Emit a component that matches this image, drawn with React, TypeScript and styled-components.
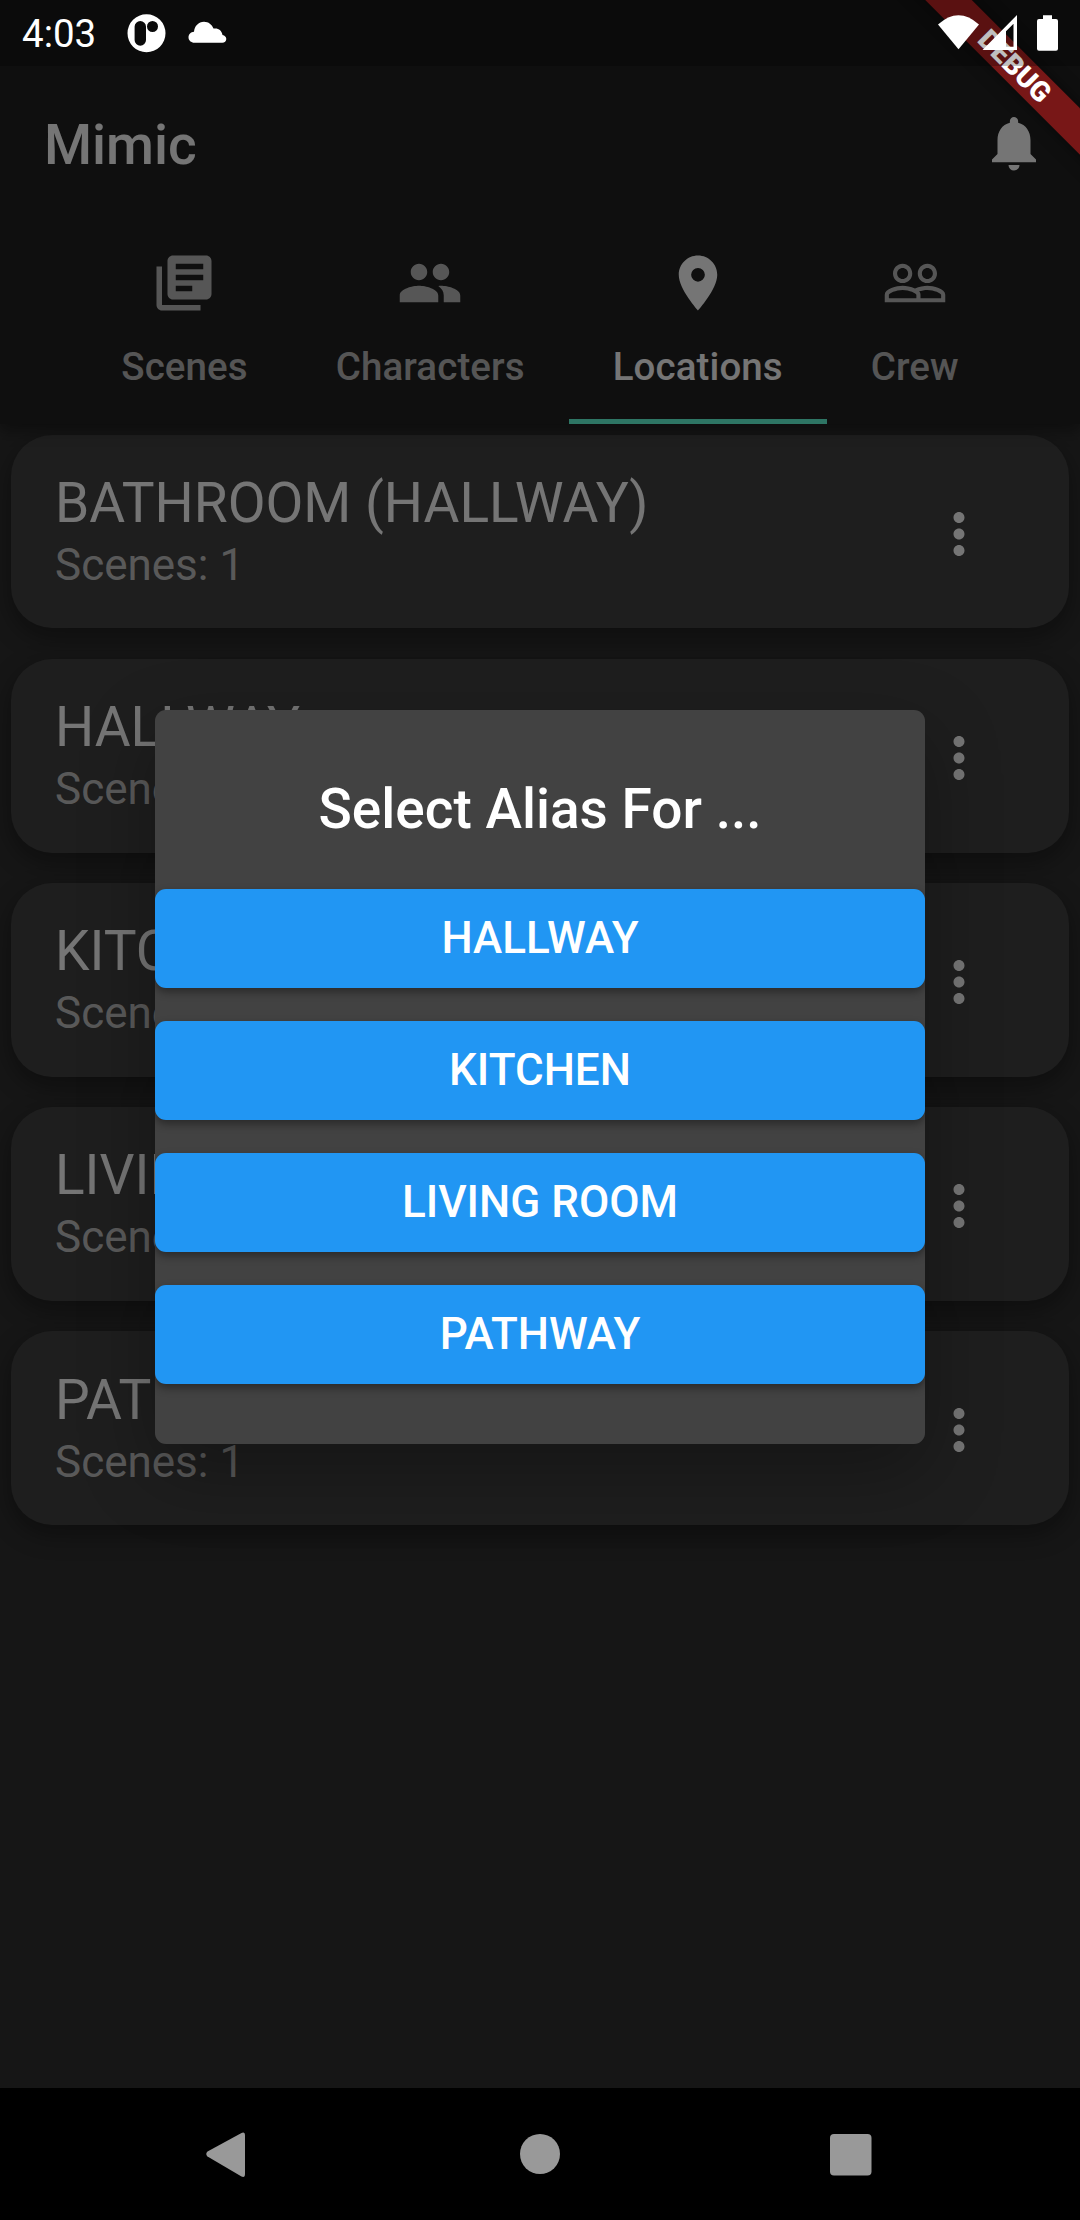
import React from "react";
import styled, { createGlobalStyle } from "styled-components";
import {
  MdLibraryBooks,
  MdLocationOn,
  MdMoreVert,
  MdNotifications,
  MdPeople,
} from "react-icons/md";

const GlobalStyle = createGlobalStyle`
  *, *::before, *::after { box-sizing: border-box; }
  body {
    margin: 0;
    background: #000;
    font-family: Roboto, "Noto Sans", sans-serif;
  }
`;

const Screen = styled.div`
  position: relative;
  display: flex;
  flex-direction: column;
  width: 1080px;
  height: 2220px;
  overflow: hidden;
  background: #303030;
  color: #fff;
`;

/* System status bar, drawn over the app */

const StatusBar = styled.div`
  position: absolute;
  top: 0;
  left: 0;
  width: 100%;
  height: 66px;
  display: flex;
  align-items: flex-start;
  justify-content: space-between;
  background: rgba(0, 0, 0, 0.25);
`;

const StatusLeft = styled.div`
  display: flex;
  padding-left: 22px;
`;

const Clock = styled.span`
  width: 105px;
  padding-top: 11px;
  font-size: 38.5px;
  line-height: 46px;
`;

const StatusGlyph = styled.svg`
  display: block;
  fill: #fff;
`;

/* App bar and tabs */

const AppBar = styled.header`
  position: relative;
  flex: none;
  height: 423.5px;
  padding-top: 66px;
  background: #212121;
  box-shadow: 0 6px 14px rgba(0, 0, 0, 0.4);
`;

const Toolbar = styled.div`
  display: flex;
  align-items: center;
  justify-content: space-between;
  height: 154px;
  padding: 0 33px 0 44px;
`;

const Title = styled.h1`
  margin: 0;
  padding-top: 4px;
  font-size: 55px;
  font-weight: 500;
  line-height: 66px;
`;

const Tabs = styled.nav`
  display: flex;
  justify-content: center;
  height: 203.5px;
`;

const Tab = styled.div<{ $active?: boolean }>`
  display: flex;
  flex-direction: column;
  align-items: center;
  gap: 27.5px;
  padding: 30px 44px 0;
  border-bottom: 5.5px solid ${(p) => (p.$active ? "#64ffda" : "transparent")};
  color: ${(p) => (p.$active ? "#fff" : "rgba(255, 255, 255, 0.7)")};
  font-size: 38.5px;
  font-weight: 500;
  line-height: 46px;
  letter-spacing: 0.1px;

  svg {
    flex: none;
    display: block;
  }
`;

/* Location cards */

const List = styled.main`
  flex: 1;
  display: flex;
  flex-direction: column;
  gap: 30.25px;
  padding: 11px;
`;

const Card = styled.article`
  flex: none;
  display: flex;
  align-items: center;
  justify-content: space-between;
  height: 193.875px;
  padding: 0 77px 0.8px 44px;
  border-radius: 41.25px;
  background: #424242;
  box-shadow: 0 9px 24px rgba(0, 0, 0, 0.36);

  svg {
    display: block;
    margin-top: 5.8px;
  }
`;

const CardTitle = styled.h2`
  margin: 0;
  font-size: 55px;
  font-weight: 400;
  line-height: 64px;
`;

const CardSubtitle = styled.p`
  margin: 4px 0 0;
  color: rgba(255, 255, 255, 0.7);
  font-size: 44px;
  line-height: 52px;
`;

/* System navigation */

const NavBar = styled.footer`
  flex: none;
  display: flex;
  height: 132px;
  background: #000;

  svg {
    display: block;
    fill: #999;
  }
`;

/* Dialog */

const Scrim = styled.div`
  position: absolute;
  top: 0;
  left: 0;
  width: 100%;
  height: 2088px;
  display: flex;
  align-items: center;
  justify-content: center;
  padding-top: 66px;
  background: rgba(0, 0, 0, 0.54);
`;

const Dialog = styled.section`
  display: flex;
  flex-direction: column;
  width: 770px;
  height: 734px;
  padding-top: 66px;
  overflow: hidden;
  border-radius: 11px;
  background: #424242;
`;

const DialogShadow = styled.div`
  border-radius: 11px;
  box-shadow: 0 26px 76px rgba(0, 0, 0, 0.3);
`;

const DialogTitle = styled.h2`
  margin: 0 0 46.5px;
  font-size: 55px;
  font-weight: 500;
  line-height: 66px;
  text-align: center;
`;

const Options = styled.div`
  display: flex;
  flex-direction: column;
  gap: 33px;
`;

const Option = styled.button`
  height: 99px;
  padding: 0;
  border: 0;
  border-radius: 11px;
  background: #2196f3;
  box-shadow: 0 4px 8px rgba(0, 0, 0, 0.38);
  color: #fff;
  font-family: inherit;
  font-size: 44px;
  font-weight: 500;
  line-height: 52px;
`;

/* Debug ribbon */

const RibbonCorner = styled.div`
  position: absolute;
  top: 0;
  right: 0;
  width: 200px;
  height: 200px;
  overflow: hidden;
`;

const Ribbon = styled.div`
  position: absolute;
  top: 49.3px;
  left: -15.8px;
  width: 300px;
  height: 33px;
  padding-left: 2px;
  transform: rotate(45deg);
  background: rgba(183, 28, 28, 0.627);
  box-shadow: 0 0 16px rgba(0, 0, 0, 0.5);
  font-size: 28px;
  font-weight: 900;
  line-height: 33px;
  text-align: center;
`;

const PeopleOutline = () => (
  <svg width="66" height="66" viewBox="0 0 24 24" fill="currentColor">
    <path d="M16.5 13c-1.2 0-3.07.34-4.5 1-1.43-.67-3.3-1-4.5-1C5.33 13 1 14.08 1 16.25V19h22v-2.75c0-2.17-4.33-3.25-6.5-3.25zm-4 4.5h-10v-1.25c0-.54 2.56-1.75 5-1.75s5 1.21 5 1.75v1.25zm9 0H14v-1.25c0-.46-.2-.86-.52-1.22.88-.3 1.96-.53 3.02-.53 2.44 0 5 1.21 5 1.75v1.25zM7.5 12c1.93 0 3.5-1.57 3.5-3.5S9.43 5 7.5 5 4 6.57 4 8.5 5.57 12 7.5 12zm0-5.5c1.1 0 2 .9 2 2s-.9 2-2 2-2-.9-2-2 .9-2 2-2zm9 5.5c1.93 0 3.5-1.57 3.5-3.5S18.430 5 16.5 5 13 6.570 13 8.500s1.570 3.500 3.500 3.500zm0-5.500c1.100 0 2 .9 2 2s-.9 2-2 2-2-.9-2-2 .9-2 2-2z" />
  </svg>
);

const tabs = [
  { label: "Scenes", icon: <MdLibraryBooks size={66} /> },
  { label: "Characters", icon: <MdPeople size={66} /> },
  { label: "Locations", icon: <MdLocationOn size={66} />, active: true },
  { label: "Crew", icon: <PeopleOutline /> },
];

const locations = [
  { name: "BATHROOM (HALLWAY)", scenes: 1 },
  { name: "HALLWAY", scenes: 1 },
  { name: "KITCHEN", scenes: 1 },
  { name: "LIVING ROOM", scenes: 1 },
  { name: "PATHWAY", scenes: 1 },
];

const aliases = ["HALLWAY", "KITCHEN", "LIVING ROOM", "PATHWAY"];

export default function App() {
  return (
    <Screen>
      <GlobalStyle />
      <AppBar>
        <Toolbar>
          <Title>Mimic</Title>
          <MdNotifications size={66} />
        </Toolbar>
        <Tabs>
          {tabs.map((t) => (
            <Tab key={t.label} $active={t.active}>
              {t.icon}
              <span>{t.label}</span>
            </Tab>
          ))}
        </Tabs>
      </AppBar>

      <List>
        {locations.map((l) => (
          <Card key={l.name}>
            <div>
              <CardTitle>{l.name}</CardTitle>
              <CardSubtitle>Scenes: {l.scenes}</CardSubtitle>
            </div>
            <MdMoreVert size={66} />
          </Card>
        ))}
      </List>

      <NavBar>
        <svg width="1080" height="132" viewBox="0 0 1080 132">
          <path d="M207.500 63.500 L241.500 45 Q245 43.500 245 47.500 V86 Q245 90 241.500 88.500 L207.500 68.500 Q205 66 207.500 63.500Z" />
          <circle cx="540" cy="66" r="20" />
          <rect x="830" y="46" width="41.500" height="41.500" rx="4" />
        </svg>
      </NavBar>

      <Scrim>
        <DialogShadow>
          <Dialog>
            <DialogTitle>Select Alias For ...</DialogTitle>
            <Options>
              {aliases.map((a) => (
                <Option key={a}>{a}</Option>
              ))}
            </Options>
          </Dialog>
        </DialogShadow>
      </Scrim>

      <RibbonCorner>
        <Ribbon>DEBUG</Ribbon>
      </RibbonCorner>

      <StatusBar>
        <StatusLeft>
          <Clock>4:03</Clock>
          <StatusGlyph width="103" height="66" viewBox="127 0 103 66">
            <path
              fillRule="evenodd"
              d="M146.500 14.200a19 19 0 1 0 0 38a19 19 0 1 0 0-38zM140.300 21a5.700 5.700 0 0 1 5.700 5.700V40a5.700 5.700 0 0 1-11.400 0V26.700a5.700 5.700 0 0 1 5.700-5.700zM152.500 21a5.500 5.500 0 1 1 0 11a5.500 5.500 0 1 1 0-11z"
            />
            <path d="M194.500 42.700C191 42.700 188.500 40.300 188.500 37.200C188.500 34.500 190.800 32 194 31.800C194.500 26 198.500 21.700 204 21.700C208.500 21.700 212 24.500 213.500 28.600C218 27.600 222 30.500 222.500 35C224.800 35.500 226.300 37 226.300 39C226.300 41.200 224.500 42.700 222.300 42.700Z" />
          </StatusGlyph>
        </StatusLeft>
        <StatusGlyph width="150" height="66" viewBox="930 0 150 66">
          <path d="M938 24.500Q958.500 6 979 24.500L958.500 49.300Z" />
          <path
            fillRule="evenodd"
            d="M982.500 50L1017 15V50ZM1006 31.300V46.800H1013.500V23.800Z"
          />
          <path d="M1043 15.300h9v3.700h4a2 2 0 0 1 2 2v27.800a2 2 0 0 1-2 2h-17a2 2 0 0 1-2-2V21a2 2 0 0 1 2-2h4z" />
        </StatusGlyph>
      </StatusBar>
    </Screen>
  );
}
